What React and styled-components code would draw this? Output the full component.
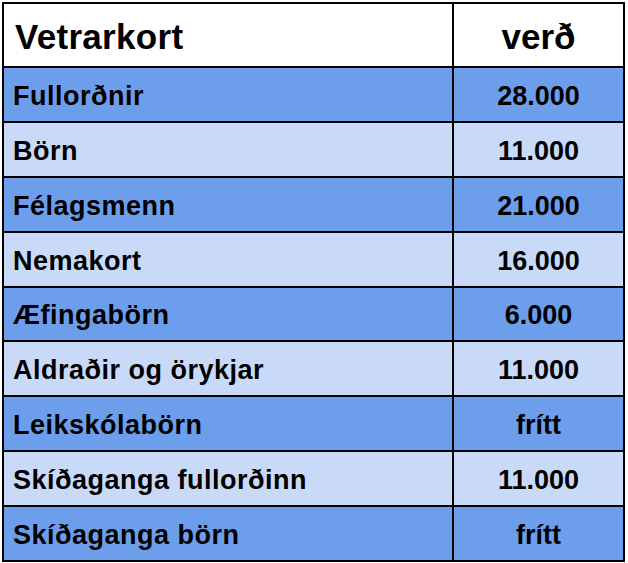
import React from "react";
import styled, { createGlobalStyle } from "styled-components";

const Global = createGlobalStyle`
  html, body { margin: 0; padding: 0; background: #ffffff; }
  body { font-family: "Liberation Sans", Arial, sans-serif; }
`;

const Page = styled.div`
  padding: 2px 0 0 2px;
`;

const Table = styled.div`
  display: grid;
  grid-template-columns: 448px 169px;
  grid-template-rows: 62px repeat(9, 1fr);
  gap: 2px;
  padding: 2px;
  width: 623px;
  height: 560px;
  box-sizing: border-box;
  background: #000000;
`;

const Cell = styled.div`
  display: flex;
  align-items: center;
  justify-content: ${(p) => (p.$center ? "center" : "flex-start")};
  padding-left: ${(p) => (p.$center ? "0" : p.$head ? "11px" : "9px")};
  padding-top: 4px;
  box-sizing: border-box;
  background: ${(p) => (p.$head ? "#ffffff" : p.$dark ? "#6d9eeb" : "#c9daf8")};
  color: #000000;
  font-weight: 700;
  font-size: ${(p) => (p.$head ? "35px" : "27px")};
  letter-spacing: ${(p) => (p.$center ? "0" : p.$head ? "0.3px" : "0.5px")};
  white-space: nowrap;
  overflow: hidden;
`;

const rows = [
  ["Fullorðnir", "28.000"],
  ["Börn", "11.000"],
  ["Félagsmenn", "21.000"],
  ["Nemakort", "16.000"],
  ["Æfingabörn", "6.000"],
  ["Aldraðir og örykjar", "11.000"],
  ["Leikskólabörn", "frítt"],
  ["Skíðaganga fullorðinn", "11.000"],
  ["Skíðaganga börn", "frítt"],
];

export default function App() {
  return (
    <>
      <Global />
      <Page>
        <Table>
          <Cell $head>Vetrarkort</Cell>
          <Cell $head $center>verð</Cell>
          {rows.map(([name, price], i) => (
            <React.Fragment key={name}>
              <Cell $dark={i % 2 === 0}>{name}</Cell>
              <Cell $dark={i % 2 === 0} $center>{price}</Cell>
            </React.Fragment>
          ))}
        </Table>
      </Page>
    </>
  );
}
